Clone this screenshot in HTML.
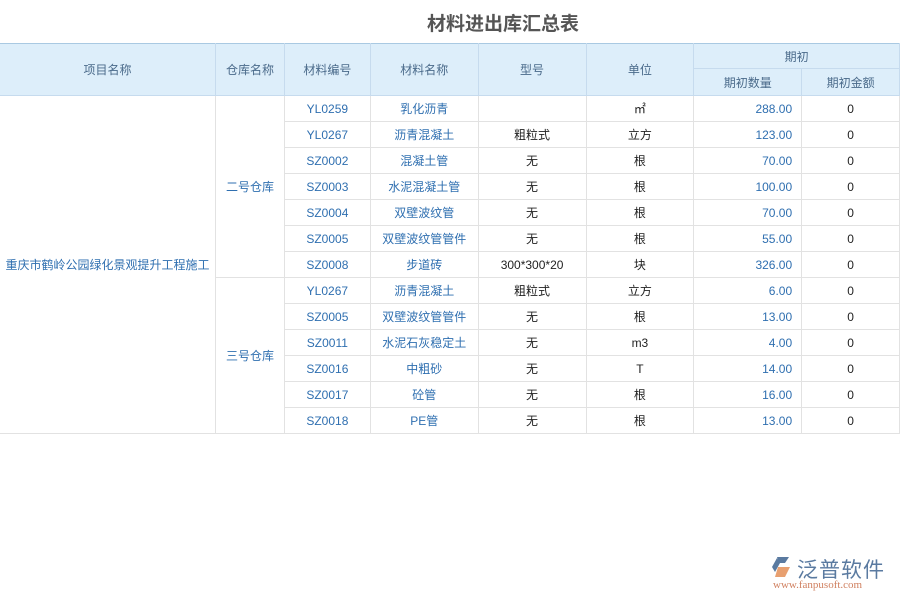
<!DOCTYPE html><html><head><meta charset="utf-8"><style>
body{margin:0;width:900px;height:600px;background:#fff;font-family:"Liberation Sans","Noto Sans CJK SC",sans-serif;position:relative;overflow:hidden}
h1{position:absolute;top:9px;left:0;width:1006px;margin:0;text-align:center;font-size:19px;color:#555;font-weight:bold}
table{position:absolute;top:43px;left:0;border-collapse:collapse;table-layout:fixed;font-size:12px}
td,th{border:1px solid #e2e2e2;text-align:center;padding:0;height:25px;color:#222}
th{background:#ddeefa;border-color:#c6dbee;color:#4a6a8a;font-weight:normal}
tr.h1 th{border-top:1px solid #a9c9e2}
.f{border-left:0}
.b{color:#2f6fb0}.r{text-align:right;padding-right:9px;color:#2f6fb0}
</style></head><body>
<h1>材料进出库汇总表</h1>
<table>
<colgroup><col style="width:216px"><col style="width:69px"><col style="width:86px"><col style="width:108px"><col style="width:108px"><col style="width:108px"><col style="width:108px"><col style="width:98px"></colgroup>
<tr class="h1"><th rowspan="2" class="f" style="height:51px">项目名称</th><th rowspan="2">仓库名称</th><th rowspan="2">材料编号</th><th rowspan="2">材料名称</th><th rowspan="2">型号</th><th rowspan="2">单位</th><th colspan="2" style="height:24px">期初</th></tr>
<tr><th>期初数量</th><th>期初金额</th></tr>
<tr><td rowspan="13" class="b f">重庆市鹤岭公园绿化景观提升工程施工</td><td rowspan="7" class="b">二号仓库</td><td class="b">YL0259</td><td class="b">乳化沥青</td><td></td><td>㎡</td><td class="r">288.00</td><td>0</td></tr>
<tr><td class="b">YL0267</td><td class="b">沥青混凝土</td><td>粗粒式</td><td>立方</td><td class="r">123.00</td><td>0</td></tr>
<tr><td class="b">SZ0002</td><td class="b">混凝土管</td><td>无</td><td>根</td><td class="r">70.00</td><td>0</td></tr>
<tr><td class="b">SZ0003</td><td class="b">水泥混凝土管</td><td>无</td><td>根</td><td class="r">100.00</td><td>0</td></tr>
<tr><td class="b">SZ0004</td><td class="b">双壁波纹管</td><td>无</td><td>根</td><td class="r">70.00</td><td>0</td></tr>
<tr><td class="b">SZ0005</td><td class="b">双壁波纹管管件</td><td>无</td><td>根</td><td class="r">55.00</td><td>0</td></tr>
<tr><td class="b">SZ0008</td><td class="b">步道砖</td><td>300*300*20</td><td>块</td><td class="r">326.00</td><td>0</td></tr>
<tr><td rowspan="6" class="b">三号仓库</td><td class="b">YL0267</td><td class="b">沥青混凝土</td><td>粗粒式</td><td>立方</td><td class="r">6.00</td><td>0</td></tr>
<tr><td class="b">SZ0005</td><td class="b">双壁波纹管管件</td><td>无</td><td>根</td><td class="r">13.00</td><td>0</td></tr>
<tr><td class="b">SZ0011</td><td class="b">水泥石灰稳定土</td><td>无</td><td>m3</td><td class="r">4.00</td><td>0</td></tr>
<tr><td class="b">SZ0016</td><td class="b">中粗砂</td><td>无</td><td>T</td><td class="r">14.00</td><td>0</td></tr>
<tr><td class="b">SZ0017</td><td class="b">砼管</td><td>无</td><td>根</td><td class="r">16.00</td><td>0</td></tr>
<tr><td class="b">SZ0018</td><td class="b">PE管</td><td>无</td><td>根</td><td class="r">13.00</td><td>0</td></tr>
</table>
<div style="position:absolute;left:770px;top:555px;width:22px;height:22px">
<svg width="24" height="24" viewBox="0 0 24 24"><path d="M7 2h12l-4 6H9z" fill="#5a7aa0"/><path d="M2 12l5-9 3 5-5 9z" fill="#5a7aa0"/><path d="M8 12h12l-5 10H5z" fill="#e8a070"/></svg></div>
<div style="position:absolute;left:797px;top:554px;font-size:21px;color:#5a7aa0;letter-spacing:1px;font-family:'Noto Sans CJK SC',sans-serif">泛普软件</div>
<div style="position:absolute;left:773px;top:579px;font-size:11px;color:#d08060;font-family:'Liberation Serif',serif">www.fanpusoft.com</div>
</body></html>
